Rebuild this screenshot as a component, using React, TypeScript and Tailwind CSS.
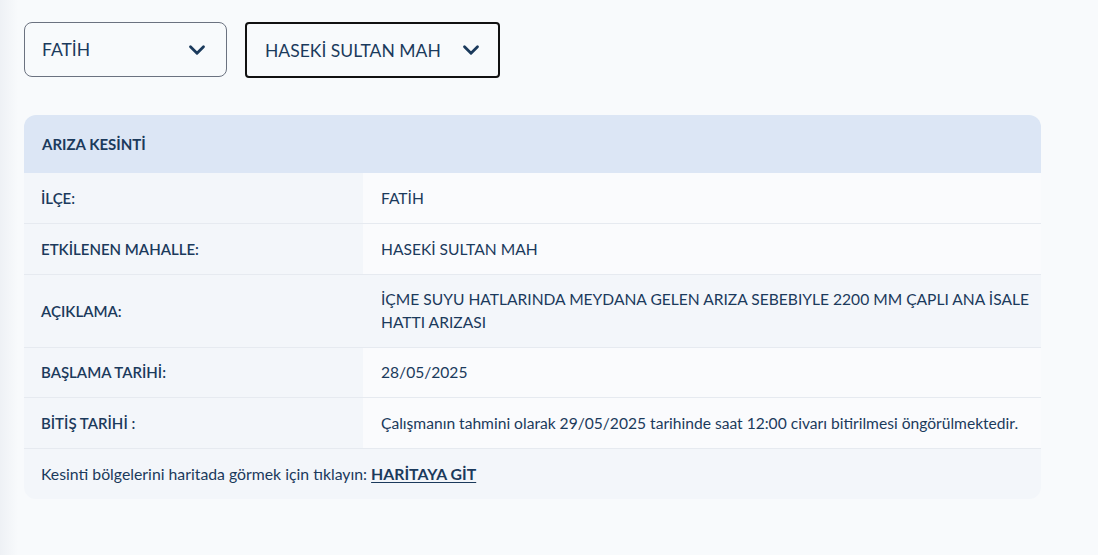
import { ChevronDown } from 'lucide-react'

const rows = [
  { label: 'İLÇE:', value: 'FATİH', h: 'h-[51px]', alt: false },
  { label: 'ETKİLENEN MAHALLE:', value: 'HASEKİ SULTAN MAH', h: 'h-[51px]', alt: false },
  {
    label: 'AÇIKLAMA:',
    value: 'İÇME SUYU HATLARINDA MEYDANA GELEN ARIZA SEBEBIYLE 2200 MM ÇAPLI ANA İSALE HATTI ARIZASI',
    h: 'h-[73px]',
    alt: true,
  },
  { label: 'BAŞLAMA TARİHİ:', value: '28/05/2025', h: 'h-[50px]', alt: false },
  {
    label: 'BİTİŞ TARİHİ :',
    value: 'Çalışmanın tahmini olarak 29/05/2025 tarihinde saat 12:00 civarı bitirilmesi öngörülmektedir.',
    h: 'h-[51px]',
    alt: false,
  },
]

export default function App() {
  return (
    <div className="min-h-[555px] w-full bg-[#f8fafc] text-[#1b3a5c] font-['Lato',sans-serif] flex">
      <div className="w-[18px] bg-gradient-to-r from-[#eef1f5] to-[#f8fafc]" />
      <div className="flex-1 pl-[6px] pt-[22px]">
        <div className="flex gap-[18px]">
          <div className="w-[203px] h-[55px] border border-[#6b7280] rounded-[8px] flex items-center justify-between pl-[17px] pr-[16px] text-[17.5px]">
            <span className="mt-[2px]">FATİH</span>
            <ChevronDown size={26} strokeWidth={2.6} className="text-[#1b3a5c]" />
          </div>
          <div className="w-[255px] h-[56px] border-2 border-[#111] rounded-[4px] flex items-center justify-between pl-[18px] pr-[14px] text-[17.5px]">
            <span className="mt-[2px]">HASEKİ SULTAN MAH</span>
            <ChevronDown size={26} strokeWidth={2.6} className="text-[#1b3a5c]" />
          </div>
        </div>

        <div className="mt-[37px] w-[1017px] rounded-[12px] overflow-hidden">
          <div className="h-[58px] bg-[#dce6f5] flex items-center pl-[18px] text-[15px] font-bold">
            ARIZA KESİNTİ
          </div>
          {rows.map((r) => (
            <div key={r.label} className={`flex ${r.h} border-b border-[#e6eaf0]`}>
              <div className="w-[339px] flex items-center pl-[17px] text-[15px] font-semibold bg-[#f3f6fa]">
                {r.label}
              </div>
              <div className={`flex-1 flex items-center pl-[18px] pr-[2px] text-[15.6px] leading-[23px] ${r.alt ? 'bg-[#f3f6fa]' : 'bg-[#fafbfd]'}`}>
                {r.value}
              </div>
            </div>
          ))}
          <div className="h-[50px] bg-[#f3f6fa] flex items-center pl-[17px] text-[15.8px]">
            <span>Kesinti bölgelerini haritada görmek için tıklayın:&nbsp;</span>
            <a className="font-bold underline underline-offset-2">HARİTAYA GİT</a>
          </div>
        </div>
      </div>
    </div>
  )
}
